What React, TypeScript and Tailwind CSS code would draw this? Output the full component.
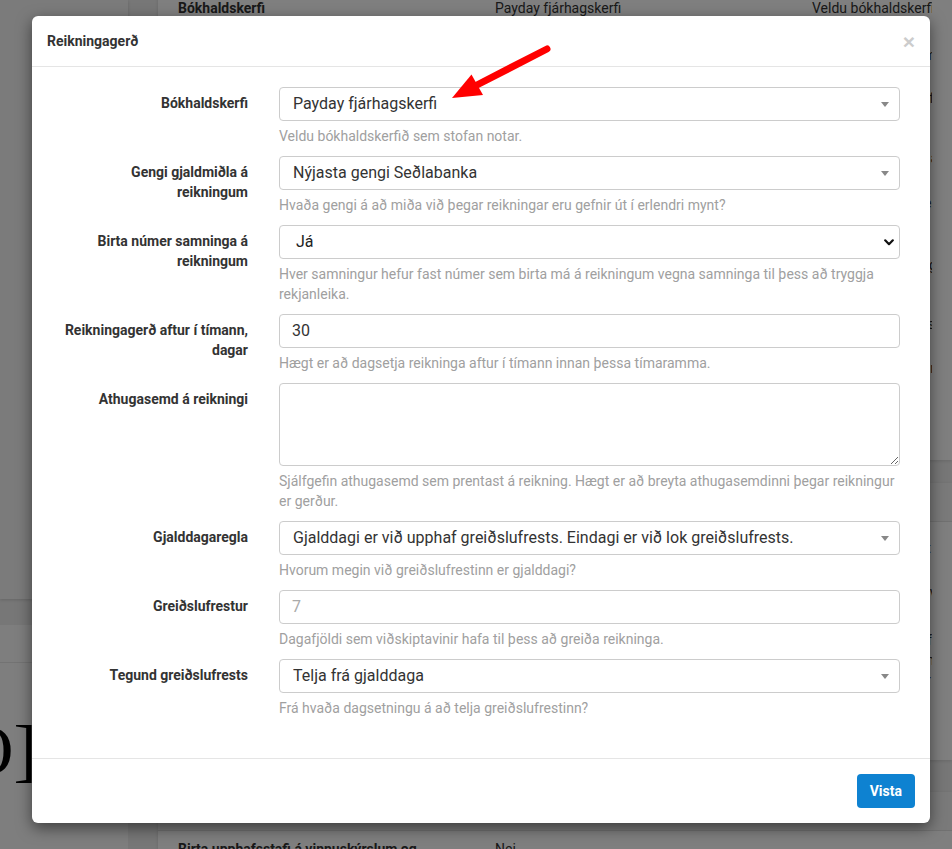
import React from "react";

const Caret = () => (
  <span className="block h-0 w-0 border-x-[4px] border-t-[5px] border-x-transparent border-t-[#888]" />
);

function Select2({ value }: { value: string }) {
  return (
    <div className="flex h-[34px] items-center justify-between rounded-[4px] border border-[#ccc] bg-white pl-[13px] pr-[10px] text-[16px] text-[#333]">
      <span className="truncate">{value}</span>
      <Caret />
    </div>
  );
}

function NativeSelect({ value }: { value: string }) {
  return (
    <div className="flex h-[34px] items-center justify-between rounded-[4px] border border-[#ccc] bg-white pl-[16px] pr-[5px] text-[16px] text-[#222]">
      <span>{value}</span>
      <svg width="10" height="7" viewBox="0 0 10 7" className="block">
        <path d="M1.2 1.3 L5 5.2 L8.8 1.3" fill="none" stroke="#111" strokeWidth="2.2" strokeLinecap="round" strokeLinejoin="round" />
      </svg>
    </div>
  );
}

function TextInput({ value, muted }: { value: string; muted?: boolean }) {
  return (
    <div
      className={
        "flex h-[34px] items-center rounded-[4px] border border-[#ccc] bg-white pl-[12px] text-[16px] " +
        (muted ? "text-[#aaa]" : "text-[#333]")
      }
    >
      {value}
    </div>
  );
}

function Group({
  label,
  help,
  children,
}: {
  label: React.ReactNode;
  help: React.ReactNode;
  children: React.ReactNode;
}) {
  return (
    <div className="mb-[10px] flex">
      <div className="w-[216px] shrink-0 whitespace-nowrap pt-[6px] text-right text-[14px] font-bold leading-[20px] text-[#333]">
        {label}
      </div>
      <div className="ml-[31px] min-w-0 flex-1">
        {children}
        <p className="mt-[5px] whitespace-nowrap text-[14px] leading-[20px] text-[#a0a0a0]">{help}</p>
      </div>
    </div>
  );
}

type BgRow = { h: number; label: string; value: string; desc: React.ReactNode };

const rowsA: BgRow[] = [
  { h: 47, label: "Bókhaldskerfi", value: "Payday fjárhagskerfi", desc: "Veldu bókhaldskerfið sem stofan notar." },
  { h: 43, label: "Gengi gjaldmiðla á reikningum", value: "Nýjasta gengi Seðlabanka", desc: "Hvaða gengi á að miða við þegar reikningar eru gefnir út." },
  { h: 60, label: "Birta númer samninga á reikningum", value: "Já", desc: "Hver samningur hefur fast númer sem birta má." },
  { h: 45, label: "Reikningagerð aftur í tímann, dagar", value: "30", desc: "Hægt er að dagsetja reikninga aftur í tímann." },
  {
    h: 62,
    label: "Athugasemd á reikningi",
    value: "",
    desc: (
      <>
        Sjálfgefin athugasemd sem prentast
        <br />á reikning.
      </>
    ),
  },
  { h: 59, label: "Gjalddagaregla", value: "Gjalddagi er við upphaf greiðslufrests.", desc: "Hvorum megin við greiðslufrestinn er gjalddagi?" },
  { h: 44, label: "Greiðslufrestur", value: "7", desc: "Dagafjöldi sem viðskiptavinir hafa til að greiða." },
  { h: 110, label: "Tegund greiðslufrests", value: "Telja frá gjalddaga", desc: "Frá hvaða dagsetningu á að telja greiðslufrestinn?" },
];

const rowsB: BgRow[] = [
  { h: 44, label: "Senda reikninga sjálfkrafa", value: "Nei", desc: "Reikningar sendast þegar nýr mánuður hefst." },
  { h: 48, label: "Sýna kennitölu viðskiptavinar", value: "Já", desc: "Kennitala viðskiptavinar birtist." },
  {
    h: 138,
    label: "Rafrænir reikningar",
    value: "Virkt",
    desc: (
      <>
        Senda reikninga rafrænt
        <br />
        til viðskiptavina sem taka á móti þeim.
        <br />
        Rafrænir reikningar berast í skeytamiðlun.
      </>
    ),
  },
];

function BgTable({ rows }: { rows: BgRow[] }) {
  return (
    <div className="flex flex-col px-[20px]">
      {rows.map((r, i) => (
        <div
          key={i}
          style={{ height: r.h }}
          className="grid grid-cols-[317px_317px_320px] overflow-hidden pt-[8px] text-[14px] leading-[20px] text-[#333]"
        >
          <div className="whitespace-nowrap font-bold">{r.label}</div>
          <div className="whitespace-nowrap">{r.value}</div>
          <div className="whitespace-nowrap">{r.desc}</div>
        </div>
      ))}
    </div>
  );
}

export default function App() {
  return (
    <div className="relative h-[849px] w-[952px] overflow-hidden bg-[#eeeeee] font-['Roboto',sans-serif]">
      {/* underlying page */}
      <div className="flex h-full">
        <aside className="flex w-[128px] shrink-0 flex-col">
          <div className="h-[599px] bg-[#f6f6f6] shadow-[0_1px_3px_rgba(0,0,0,0.15)]" />
          <div className="mt-[26px] flex flex-1 flex-col bg-[#fcfcfc]">
            <div className="h-[38px] border-b border-[#e6e6e6]" />
            <div className="-ml-[37px] mt-[48px] whitespace-nowrap font-['Liberation_Serif',serif] text-[70px] leading-[80px] text-black">
              O]
            </div>
          </div>
        </aside>
        <main className="flex min-w-0 flex-1 flex-col pl-[30px]">
          <div className="-mt-[10px] overflow-hidden bg-white shadow-[0_1px_3px_rgba(0,0,0,0.12)]">
            <BgTable rows={rowsA} />
          </div>
          <div className="mt-[23px] overflow-hidden bg-white shadow-[0_1px_3px_rgba(0,0,0,0.12)]">
            <div className="h-[39px] border-b border-[#e3e3e3] bg-[#f5f5f5]" />
            <div className="pt-[8px]">
              <BgTable rows={rowsB} />
            </div>
          </div>
          <div className="mt-[32px] flex-1 overflow-hidden bg-white shadow-[0_1px_3px_rgba(0,0,0,0.12)]">
            <div className="h-[39px] border-b border-[#e3e3e3] bg-[#f5f5f5]" />
            <BgTable
              rows={[
                {
                  h: 60,
                  label: "Birta upphafsstafi á vinnuskýrslum og",
                  value: "Nei",
                  desc: "",
                },
              ]}
            />
          </div>
        </main>
      </div>

      {/* backdrop */}
      <div className="absolute inset-0 bg-black/50" />

      {/* modal */}
      <div className="absolute left-[32px] top-[16px] w-[898px] rounded-[6px] bg-white shadow-[0_5px_15px_rgba(0,0,0,0.5)]">
        <div className="flex h-[51px] items-center justify-between border-b border-[#e5e5e5] pl-[15px] pr-[15px]">
          <h4 className="text-[14px] font-bold text-[#333]">Reikningagerð</h4>
          <button className="font-['Liberation_Sans',sans-serif] text-[21px] font-bold leading-none text-[#ccc]">×</button>
        </div>

        <div className="pb-[30px] pr-[30px] pt-[20px]">
          <Group label="Bókhaldskerfi" help="Veldu bókhaldskerfið sem stofan notar.">
            <Select2 value="Payday fjárhagskerfi" />
          </Group>
          <Group
            label={
              <>
                Gengi gjaldmiðla á
                <br />
                reikningum
              </>
            }
            help="Hvaða gengi á að miða við þegar reikningar eru gefnir út í erlendri mynt?"
          >
            <Select2 value="Nýjasta gengi Seðlabanka" />
          </Group>
          <Group
            label={
              <>
                Birta númer samninga á
                <br />
                reikningum
              </>
            }
            help={
              <>
                Hver samningur hefur fast númer sem birta má á reikningum vegna samninga til þess að tryggja
                <br />
                rekjanleika.
              </>
            }
          >
            <NativeSelect value="Já" />
          </Group>
          <Group
            label={
              <>
                Reikningagerð aftur í tímann,
                <br />
                dagar
              </>
            }
            help="Hægt er að dagsetja reikninga aftur í tímann innan þessa tímaramma."
          >
            <TextInput value="30" />
          </Group>
          <Group
            label="Athugasemd á reikningi"
            help={
              <>
                Sjálfgefin athugasemd sem prentast á reikning. Hægt er að breyta athugasemdinni þegar reikningur
                <br />
                er gerður.
              </>
            }
          >
            <textarea
              readOnly
              defaultValue=""
              className="block h-[83px] w-full rounded-[4px] border border-[#ccc] bg-white"
            />
          </Group>
          <Group label="Gjalddagaregla" help="Hvorum megin við greiðslufrestinn er gjalddagi?">
            <Select2 value="Gjalddagi er við upphaf greiðslufrests. Eindagi er við lok greiðslufrests." />
          </Group>
          <Group label="Greiðslufrestur" help="Dagafjöldi sem viðskiptavinir hafa til þess að greiða reikninga.">
            <TextInput value="7" muted />
          </Group>
          <Group label="Tegund greiðslufrests" help="Frá hvaða dagsetningu á að telja greiðslufrestinn?">
            <Select2 value="Telja frá gjalddaga" />
          </Group>
        </div>

        <div className="flex justify-end border-t border-[#e5e5e5] px-[15px] pb-[15px] pt-[15px]">
          <button className="h-[34px] rounded-[4px] bg-[#0e82d1] px-[13px] text-[14px] font-bold text-white">
            Vista
          </button>
        </div>
      </div>

      {/* red annotation arrow */}
      <svg className="pointer-events-none absolute inset-0" width="952" height="849" viewBox="0 0 952 849">
        <line x1="547" y1="49" x2="474" y2="86.5" stroke="#ff0000" strokeWidth="7" strokeLinecap="round" />
        <polygon points="452,98 471.5,74.5 483,95" fill="#ff0000" />
      </svg>
    </div>
  );
}
